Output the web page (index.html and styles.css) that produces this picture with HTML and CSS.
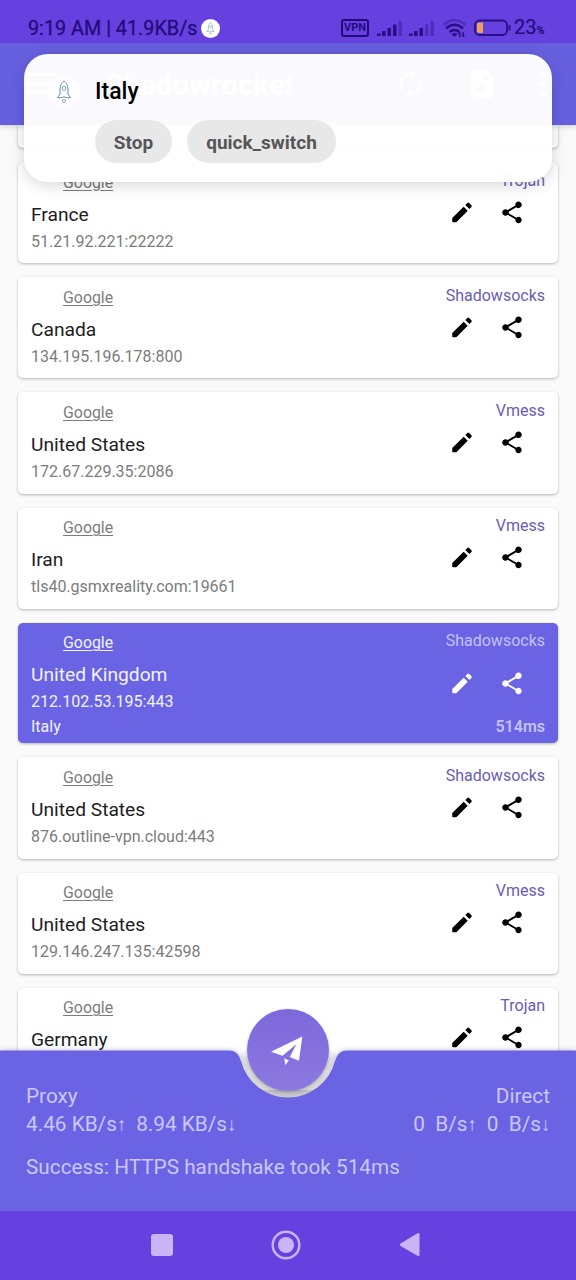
FILE: index.html
```
<!DOCTYPE html>
<html lang="en">
<head>
<meta charset="utf-8">
<title>Shadowrocket</title>
<link rel="stylesheet" href="styles.css">
</head>
<body>
<svg class="defs" width="0" height="0">
  <symbol id="edit" viewBox="0 0 24 24"><path d="M3 17.250V20.400a.6.6 0 0 0 .6.6h3.150L17.300 10.450l-3.750-3.750L3 17.250zM20.710 7.040a1.200 1.200 0 0 0 0-1.600l-2.150-2.150a1.200 1.200 0 0 0-1.600 0l-1.900 1.900 3.750 3.750 1.900-1.900z"/></symbol>
  <symbol id="share" viewBox="0 0 24 24"><path d="M18 16.08c-.76 0-1.44.3-1.96.77L8.91 12.7c.05-.23.09-.46.09-.7s-.04-.47-.09-.7l7.05-4.11c.54.5 1.25.81 2.04.81 1.66 0 3-1.34 3-3s-1.34-3-3-3-3 1.34-3 3c0 .24.04.47.09.7L8.04 9.81C7.5 9.31 6.79 9 6 9c-1.66 0-3 1.34-3 3s1.34 3 3 3c.79 0 1.5-.31 2.04-.81l7.12 4.16c-.05.21-.08.43-.08.65 0 1.61 1.31 2.92 2.92 2.92s2.92-1.31 2.92-2.92-1.31-2.92-2.92-2.92z"/></symbol>
  <symbol id="rocket" viewBox="0 0 16 24"><path d="M8 1C5.500 3 4 6 4 9v5l-2.600 3.600H6L8 16.600l2 1h4.600L12 14V9c0-3-1.500-6-4-8z" fill="none" stroke="#6f8fa0" stroke-width="1"/><circle cx="8" cy="8.500" r="1.900" fill="none" stroke="#4aa9b5" stroke-width=".9"/><circle cx="8" cy="21" r="1.600" fill="none" stroke="#8b8fa8" stroke-width=".8"/></symbol>
</svg>

<div class="phone">
  <header class="status">
    <span class="clock">9:19 AM | 41.9KB/s</span>
    <span class="badge"><svg width="9" height="13"><use href="#rocket"/></svg></span>
    <span class="vpn">VPN</span>
    <svg class="signal" width="26" height="17" viewBox="0 0 26 17">
      <path d="M0 13.500h3.500V16H0zM5 11h3.500v5H5zM10.500 8H14v8h-3.500zM16 4.500h3.500V16H16z"/><path class="dim" d="M21.500 1H25v15h-3.500z"/>
    </svg>
    <svg class="signal second" width="26" height="17" viewBox="0 0 26 17">
      <path d="M0 13.500h3.500V16H0zM5 11h3.500v5H5zM10.500 8H14v8h-3.500z"/><path class="dim" d="M16 4.500h3.500V16H16zM21.500 1H25v15h-3.500z"/>
    </svg>
    <svg class="wifi" width="25" height="19" viewBox="0 0 25 19">
      <path class="dim-line" d="M1.500 6Q12.500-3.500 23.500 6"/><path d="M4 9.500q8.500-7.500 17 0M7.500 13q5-4 10 0"/><path class="solid" d="M9.500 15q3-2 6 0l-3 3zM17 18v-3h-1.200l1.900-2.300L19.600 15h-1.200v3zM20.500 13v3h-1.200l1.900 2.300L23.100 16h-1.200v-3z"/>
    </svg>
    <svg class="battery" width="37" height="18" viewBox="0 0 37 18">
      <rect x="1" y="1.500" width="32" height="14.500" rx="4.500"/><path class="charge" d="M5 3.500h4v10.500H5a2 2 0 0 1-2-2V5.500a2 2 0 0 1 2-2z"/><path class="nub" d="M34.500 6h1q1 0 1 1v3.500q0 1-1 1h-1z"/>
    </svg>
    <span class="percent">23<small>%</small></span>
  </header>

  <div class="appbar">
    <svg class="menu" width="32" height="24" viewBox="0 0 32 24"><path d="M0 1h32v3H0zM0 10h32v3H0zM0 19h32v3H0z"/></svg>
    <h1>Shadowrocket</h1>
    <svg width="34" height="34" viewBox="0 0 24 24"><path d="M12 6v3l4-4-4-4v3a8 8 0 0 0-6.760 12.260L6.700 14.800A6 6 0 0 1 12 6zm6.760 1.740L17.300 9.200A6 6 0 0 1 12 18v-3l-4 4 4 4v-3a8 8 0 0 0 6.760-12.260z"/></svg>
    <svg width="34" height="34" viewBox="0 0 24 24"><path d="M14 2H6a2 2 0 0 0-2 2v16c0 1.100.9 2 2 2h12a2 2 0 0 0 2-2V8zm2 14h-3v3h-2v-3H8v-2h3v-3h2v3h3zm-3-7V3.500L18.500 9z"/></svg>
    <svg class="more" width="8" height="32" viewBox="0 0 8 32"><circle cx="4" cy="6" r="3"/><circle cx="4" cy="16" r="3"/><circle cx="4" cy="26" r="3"/></svg>
  </div>

  <main class="list">
    <article class="card stub"></article>
    <article class="card">
      <div class="info"><a>Google</a><h2>France</h2><p>51.21.92.221:22222</p></div>
      <div class="side"><span class="type">Trojan</span><div class="actions"><svg><use href="#edit"/></svg><svg><use href="#share"/></svg></div></div>
    </article>
    <article class="card">
      <div class="info"><a>Google</a><h2>Canada</h2><p>134.195.196.178:800</p></div>
      <div class="side"><span class="type">Shadowsocks</span><div class="actions"><svg><use href="#edit"/></svg><svg><use href="#share"/></svg></div></div>
    </article>
    <article class="card">
      <div class="info"><a>Google</a><h2>United States</h2><p>172.67.229.35:2086</p></div>
      <div class="side"><span class="type">Vmess</span><div class="actions"><svg><use href="#edit"/></svg><svg><use href="#share"/></svg></div></div>
    </article>
    <article class="card">
      <div class="info"><a>Google</a><h2>Iran</h2><p>tls40.gsmxreality.com:19661</p></div>
      <div class="side"><span class="type">Vmess</span><div class="actions"><svg><use href="#edit"/></svg><svg><use href="#share"/></svg></div></div>
    </article>
    <article class="card active">
      <div class="info"><a>Google</a><h2>United Kingdom</h2><p>212.102.53.195:443</p><p class="exit">Italy</p></div>
      <div class="side"><span class="type">Shadowsocks</span><div class="actions"><svg><use href="#edit"/></svg><svg><use href="#share"/></svg></div><b class="ping">514ms</b></div>
    </article>
    <article class="card">
      <div class="info"><a>Google</a><h2>United States</h2><p>876.outline-vpn.cloud:443</p></div>
      <div class="side"><span class="type">Shadowsocks</span><div class="actions"><svg><use href="#edit"/></svg><svg><use href="#share"/></svg></div></div>
    </article>
    <article class="card">
      <div class="info"><a>Google</a><h2>United States</h2><p>129.146.247.135:42598</p></div>
      <div class="side"><span class="type">Vmess</span><div class="actions"><svg><use href="#edit"/></svg><svg><use href="#share"/></svg></div></div>
    </article>
    <article class="card">
      <div class="info"><a>Google</a><h2>Germany</h2></div>
      <div class="side"><span class="type">Trojan</span><div class="actions"><svg><use href="#edit"/></svg><svg><use href="#share"/></svg></div></div>
    </article>

    <section class="panel">
      <svg class="panel-shape" width="576" height="161" viewBox="0 0 576 161">
        <defs>
          <linearGradient id="well" x1="0" y1="0" x2="0" y2="1"><stop offset="0" stop-color="#ccc" stop-opacity="0"/><stop offset=".15" stop-color="#ccc" stop-opacity="0"/><stop offset=".5" stop-color="#d9d9de"/><stop offset=".84" stop-color="#d6d6da"/><stop offset=".85" stop-color="#bdbdc2"/><stop offset="1" stop-color="#cdcdd2"/></linearGradient>
        </defs>
        <path fill="url(#well)" d="M239-8h98v8a49 49 0 0 1-98 0z"/>
        <path class="surface" d="M0 .5H230Q238 .5 241 11A48.500 48.500 0 0 0 335 11Q338 .5 346 .5H576V161H0Z"/>
      </svg>
      <div class="traffic">
        <div><span>Proxy</span><span class="rate">4.46 KB/s<i>↑</i>&nbsp; 8.94 KB/s<i>↓</i></span></div>
        <div class="direct"><span>Direct</span><span class="rate">0&nbsp; B/s<i>↑</i>&nbsp; 0&nbsp; B/s<i>↓</i></span></div>
      </div>
      <p class="result">Success: HTTPS handshake took 514ms</p>
      <button class="fab" aria-label="Connect">
        <svg width="34" height="32" viewBox="0 0 34 32"><path d="M0 17.700 31.300 2.500 28 26.700 18.800 23 25.500 10 11.500 21.700zM13.300 24.200l4.500 2.300-3.500 4.500z"/></svg>
      </button>
    </section>
  </main>

  <nav class="nav">
    <svg width="22" height="22"><rect width="22" height="22" rx="3"/></svg>
    <svg width="30" height="30"><circle class="ring" cx="15" cy="15" r="13.300"/><circle cx="15" cy="15" r="8"/></svg>
    <svg width="22" height="26"><path d="M1.500 11.500 18.500 1.200Q20.500.5 20.500 2v21q0 1.500-2 .8L1.500 14Q0 12.700 1.500 11.500z"/></svg>
  </nav>

  <aside class="notice">
    <span class="app-icon"><svg width="16" height="24"><use href="#rocket"/></svg></span>
    <div>
      <strong>Italy</strong>
      <div class="buttons"><button>Stop</button><button class="switch">quick_switch</button></div>
    </div>
  </aside>
</div>
</body>
</html>
```

FILE: styles.css
```
* { box-sizing: border-box; }
body { margin: 0; font-family: Roboto, "Noto Sans", sans-serif; background: #fafafa; }
h1, h2, p { margin: 0; font-weight: 400; }
button { border: 0; padding: 0; font: inherit; }
svg { display: block; flex: none; }
.defs { position: absolute; }

.phone { position: relative; width: 576px; height: 1280px; overflow: hidden; display: flex; flex-direction: column; }

.status { height: 43px; background: #6741df; color: #230b7c; padding: 13px 0 0 28px; display: flex; align-items: center; fill: #2a0f86; flex: none; }
.clock { width: 169px; font-size: 19.800px; line-height: 28px; padding-top: 1px; white-space: nowrap; -webkit-text-stroke: .3px; }
.badge { width: 19px; height: 19px; margin-left: 4px; border-radius: 50%; background: #fff; display: grid; place-items: center; }
.vpn { width: 28px; height: 18px; margin-left: 121px; border: 2px solid; border-radius: 3px; font-size: 11px; font-weight: 700; line-height: 14px; text-align: center; display: flex; justify-content: center; }
.signal { margin-left: 8px; }
.signal.second { margin-left: 6px; }
.dim { opacity: .4; }
.wifi { margin-left: 7px; fill: none; stroke: #2a0f86; stroke-width: 2.600; }
.wifi .dim-line { opacity: .4; }
.wifi .solid { fill: #2a0f86; stroke: none; }
.battery { margin-left: 7px; }
.battery rect { fill: none; stroke: #2a0f86; stroke-width: 1.800; }
.battery .charge { fill: #eda25c; }
.percent { margin-left: 3px; padding-top: 2px; font-size: 20px; line-height: 28px; white-space: nowrap; -webkit-text-stroke: .2px; }
.percent small { font-size: 11px; font-weight: 500; }

.appbar { height: 82px; flex: none; background: #6660e0; display: flex; align-items: center; padding: 0 16px 0 26px; fill: #fff; color: #fff; box-shadow: 0 2px 5px rgba(0,0,0,.15); z-index: 1; }
.appbar h1 { width: 289px; margin-left: 47px; padding-top: 2px; font-size: 29.600px; font-weight: 700; line-height: 36px; }
.appbar svg + svg { margin-left: 37px; }
.appbar .more { margin-left: 40px; }

.list { position: relative; flex: 1; min-height: 0; overflow: hidden; padding: 0 18px; display: flex; flex-direction: column; gap: 14px; background: #fafafa; }
.card { flex: none; height: 101.200px; padding: 8px 13px 6px; border-radius: 5px; background: #fff; box-shadow: 0 1px 3px rgba(0,0,0,.28); display: flex; justify-content: space-between; }
.card.stub { height: 23px; border-radius: 0 0 5px 5px; }
.info { padding-top: 2.700px; display: flex; flex-direction: column; align-items: flex-start; color: #7c7c7c; font-size: 16px; line-height: 20px; }
.info a { margin-left: 32px; font-size: 15.900px; text-decoration: underline; text-underline-offset: 2px; text-decoration-thickness: 1px; }
.info h2 { margin: 10px 0 5px; font-size: 19.200px; line-height: 24px; color: #1d1d1d; }
.info .exit { margin-top: 5px; }
.side { display: grid; grid-template-rows: 1fr 26px 1fr; justify-items: end; font-size: 16px; line-height: 20px; color: #6a5cb4; height: 85.200px; }
.type { padding-top: .6px; }
.actions { display: flex; gap: 24px; margin-right: 20.500px; fill: #000; transform: translateY(-.6px); }
.actions svg { width: 26px; height: 26px; }
.ping { align-self: end; font-weight: 600; }
.active { height: 120.600px; background: #6a63e4; }
.active .side { height: 106px; color: #c5c1fb; margin-bottom: -2px; }
.active .info, .active .info h2 { color: #f3f1ff; }
.active .actions { fill: #fff; }

.panel { position: absolute; left: 0; bottom: 0; width: 576px; height: 161px; padding: 32px 26px 0; color: #cbc7fa; font-size: 20.780px; line-height: 28px; }
.panel-shape { position: absolute; left: 0; top: 0; overflow: visible; filter: drop-shadow(0 -1px 2px rgba(60,50,140,.25)); }
.surface { fill: #6a63e4; }
.traffic { position: relative; display: flex; justify-content: space-between; }
.traffic div { display: flex; flex-direction: column; }
.traffic .direct { align-items: flex-end; }
.rate { white-space: nowrap; }
.rate i { display: inline-block; width: 9px; text-align: center; font-style: normal; font-size: 19px; line-height: 20px; }
.result { position: relative; margin-top: 15px; }
.fab { position: absolute; left: 247px; top: -41px; width: 82px; height: 82px; border-radius: 50%; background: linear-gradient(#7d68dc, #8b79df); display: grid; place-items: center; fill: #fff; box-shadow: 0 1px 3px rgba(0,0,0,.25); }

.nav { height: 69px; flex: none; background: #6741df; display: flex; align-items: center; padding: 0 0 1px 151px; fill: #c9b4f6; }
.nav svg:nth-child(2) { margin-left: 98px; }
.nav svg:nth-child(3) { margin-left: 98px; }
.nav .ring { fill: none; stroke: #c9b4f6; stroke-width: 2.400; }

.notice { position: absolute; z-index: 2; left: 24px; top: 54px; width: 528px; height: 128px; padding: 22px 0 0 24px; border-radius: 24px; background: rgba(255,255,255,.96); box-shadow: 0 3px 16px rgba(0,0,0,.16); display: flex; gap: 15px; }
.app-icon { width: 32px; height: 32px; border-radius: 50%; background: #fff; display: grid; place-items: center; }
.notice strong { display: block; padding-top: 1px; font-size: 23px; font-weight: 500; line-height: 30px; color: #000; }
.buttons { display: flex; gap: 15px; margin-top: 13px; }
.buttons button { width: 77px; height: 43px; padding-top: 1px; border-radius: 22px; background: #e8e8e9; color: #565656; font-size: 19px; font-weight: 700; }
.buttons .switch { width: 149px; }
```
